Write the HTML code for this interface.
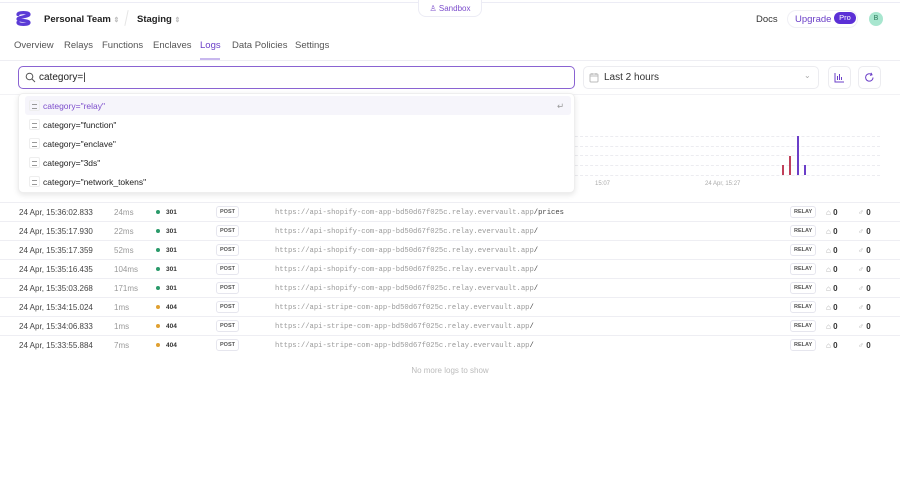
<!DOCTYPE html>
<html><head><meta charset="utf-8"><style>
*{box-sizing:border-box;margin:0;padding:0}
body{width:900px;height:484px;background:#fff;font-family:"Liberation Sans",sans-serif;position:relative;overflow:hidden;color:#222}
.a{position:absolute;white-space:nowrap}
.mono{font-family:"Liberation Mono",monospace}
.row{position:absolute;left:0;width:900px;height:19px;border-top:1px solid #eeeef3;font-size:8px}
.row span{position:absolute;top:5px;white-space:nowrap}
.row .mono{font-size:7.2px;top:5.5px}
.tag{position:absolute;border:1px solid #e6e6ee;border-radius:3px;font-size:5.5px;font-weight:bold;color:#555;padding:2px 3px;top:3px!important;background:#fff}
.dot{width:4px;height:4px;border-radius:50%;top:7px!important}
.sug{position:absolute;left:6px;width:546px;height:19px;font-size:8.5px;color:#222}
.sug .ic{position:absolute;left:4px;top:4px;width:11px;height:11px;border:1px solid #eee;border-radius:2px}
.sug .ic:before{content:"";position:absolute;left:2px;top:3px;width:5px;height:3px;border-top:1px solid #999;border-bottom:1px solid #999}
.sug span{position:absolute;left:18px;top:5px}
.grid{position:absolute;left:575px;width:305px;border-top:1px dashed #ececf0}
.nav span{position:absolute;white-space:nowrap}
</style></head><body>
<div class="a" style="left:0;top:2px;width:900px;border-top:1px solid #ececf5"></div>
<div class="a" style="left:418px;top:0;width:64px;height:17px;background:#fff;border:1px solid #ececf5;border-top:none;border-radius:0 0 8px 8px;font-size:8px;color:#7c4dcc;text-align:center;line-height:17px">♙ Sandbox</div>
<svg class="a" style="left:15px;top:10px" width="17" height="17" viewBox="0 0 17 17"><path d="M3 4.5 C3 2,14 2,14 4.5 C14 6.5,3 7,3 9 C3 11,14 10,14 12.5 C14 15,3 15,3 12.5" fill="none" stroke="#5b3bd6" stroke-width="3.2" stroke-linecap="round"/></svg>
<div class="a" style="left:44px;top:14px;font-size:9.5px;font-weight:bold;color:#222">Personal Team <span style="color:#bbb;font-size:7px">⇕</span></div>
<div class="a" style="left:126px;top:10px;height:16px;border-left:1px solid #e5e5e5;transform:rotate(12deg)"></div>
<div class="a" style="left:137px;top:14px;font-size:9.5px;font-weight:bold;color:#222">Staging <span style="color:#bbb;font-size:7px">⇕</span></div>
<div class="a" style="left:756px;top:14px;font-size:9.5px;color:#333">Docs</div>
<div class="a" style="left:787px;top:10px;width:71px;height:18px;border:1px solid #f0f0f5;border-radius:9px"></div>
<div class="a" style="left:795px;top:14px;font-size:9.5px;color:#6b3fc8">Upgrade</div>
<div class="a" style="left:834px;top:12px;width:22px;height:12px;border-radius:6px;background:#5b2fd6;color:#fff;font-size:7.5px;text-align:center;line-height:12px">Pro</div>
<div class="a" style="left:869px;top:12px;width:14px;height:14px;border-radius:50%;background:#a8e6cf;color:#2a7a5a;font-size:7px;text-align:center;line-height:14px">B</div>
<div class="a nav" style="left:14px;top:40px;font-size:9.5px;color:#555">
<span style="left:0">Overview</span><span style="left:50px">Relays</span><span style="left:88px">Functions</span><span style="left:139px">Enclaves</span><span style="left:186px;color:#6b3fc8">Logs</span><span style="left:218px">Data Policies</span><span style="left:281px">Settings</span></div>
<div class="a" style="left:200px;top:58px;width:20px;height:2px;background:#c8b8ee"></div>
<div class="a" style="left:0;top:60px;width:900px;border-top:1px solid #eeeef3"></div>
<div class="a" style="left:18px;top:66px;width:557px;height:23px;border:1.5px solid #8a63d2;border-radius:5px"></div>
<svg class="a" style="left:25px;top:72px" width="11" height="11" viewBox="0 0 11 11"><circle cx="4.5" cy="4.5" r="3.3" fill="none" stroke="#555" stroke-width="1"/><path d="M7 7l3 3" stroke="#555"/></svg>
<div class="a" style="left:39px;top:72px;font-size:10px;color:#222">category=|</div>
<div class="a" style="left:583px;top:66px;width:236px;height:23px;border:1px solid #ececf0;border-radius:5px"></div>
<svg class="a" style="left:589px;top:72px" width="11" height="11"><rect x="1" y="2" width="8" height="8" rx="1" fill="none" stroke="#bbb"/><path d="M1 4h8M3 1v2M7 1v2" stroke="#bbb"/></svg>
<div class="a" style="left:604px;top:72px;font-size:10px;color:#333">Last 2 hours</div>
<div class="a" style="left:804px;top:71px;font-size:8px;color:#aaa">⌄</div>
<div class="a" style="left:828px;top:66px;width:23px;height:23px;border:1px solid #ececf0;border-radius:5px"></div>
<svg class="a" style="left:834px;top:72px" width="11" height="11"><path d="M1 1v9h9M3.5 8V4M5.5 8V2M7.5 8V5" stroke="#6b3fc8" fill="none"/></svg>
<div class="a" style="left:858px;top:66px;width:23px;height:23px;border:1px solid #ececf0;border-radius:5px"></div>
<svg class="a" style="left:864px;top:72px" width="11" height="11"><path d="M9 5.5A3.7 3.7 0 1 1 7.5 2.5M7 0.8l1 2-2 .6" stroke="#6b3fc8" fill="none"/></svg>
<div class="a" style="left:0;top:94px;width:900px;border-top:1px solid #f2f2f5"></div>
<div class="grid" style="top:136px"></div><div class="grid" style="top:146px"></div><div class="grid" style="top:155px"></div><div class="grid" style="top:165px"></div><div class="grid" style="top:175px"></div>
<div class="a" style="left:782px;top:165px;width:2px;height:10px;background:#c0405a"></div>
<div class="a" style="left:789px;top:156px;width:2px;height:19px;background:#c0405a"></div>
<div class="a" style="left:797px;top:136px;width:2px;height:39px;background:#6b3fc8"></div>
<div class="a" style="left:804px;top:165px;width:2px;height:10px;background:#6b3fc8"></div>
<div class="a" style="left:595px;top:181px;font-size:6px;color:#aaa">15:07</div>
<div class="a" style="left:705px;top:181px;font-size:6px;color:#aaa">24 Apr, 15:27</div>
<div class="a" style="left:18px;top:93px;width:557px;height:100px;background:#fff;border:1px solid #eee;border-radius:5px;box-shadow:0 2px 6px rgba(0,0,0,.1)">
<div class="sug" style="top:2px;background:#f6f5fb;border-radius:3px;color:#7c4dcc"><div class="ic"></div><span>category="relay"</span><span style="left:532px;color:#999">↵</span></div>
<div class="sug" style="top:21px"><div class="ic"></div><span>category="function"</span></div>
<div class="sug" style="top:40px"><div class="ic"></div><span>category="enclave"</span></div>
<div class="sug" style="top:59px"><div class="ic"></div><span>category="3ds"</span></div>
<div class="sug" style="top:78px"><div class="ic"></div><span>category="network_tokens"</span></div>
</div>
<div class="row" style="top:202px"><span style="left:19px;color:#444">24 Apr, 15:36:02.833</span><span style="left:114px;color:#999">24ms</span><span class="dot" style="left:156px;background:#2a9a6a"></span><span style="left:166px;font-size:6.5px;font-weight:bold;color:#333;top:6px">301</span><span class="tag" style="left:216px">POST</span><span class="mono" style="left:275px;color:#999">https://api-shopify-com-app-bd50d67f025c.relay.evervault.app<b style="color:#444;font-weight:normal">/prices</b></span><span class="tag" style="left:790px">RELAY</span><span style="left:826px;color:#aaa">⌂<b style="color:#333"> 0</b></span><span style="left:858px;color:#aaa">♂<b style="color:#333"> 0</b></span></div>
<div class="row" style="top:221px"><span style="left:19px;color:#444">24 Apr, 15:35:17.930</span><span style="left:114px;color:#999">22ms</span><span class="dot" style="left:156px;background:#2a9a6a"></span><span style="left:166px;font-size:6.5px;font-weight:bold;color:#333;top:6px">301</span><span class="tag" style="left:216px">POST</span><span class="mono" style="left:275px;color:#999">https://api-shopify-com-app-bd50d67f025c.relay.evervault.app<b style="color:#444;font-weight:normal">/</b></span><span class="tag" style="left:790px">RELAY</span><span style="left:826px;color:#aaa">⌂<b style="color:#333"> 0</b></span><span style="left:858px;color:#aaa">♂<b style="color:#333"> 0</b></span></div>
<div class="row" style="top:240px"><span style="left:19px;color:#444">24 Apr, 15:35:17.359</span><span style="left:114px;color:#999">52ms</span><span class="dot" style="left:156px;background:#2a9a6a"></span><span style="left:166px;font-size:6.5px;font-weight:bold;color:#333;top:6px">301</span><span class="tag" style="left:216px">POST</span><span class="mono" style="left:275px;color:#999">https://api-shopify-com-app-bd50d67f025c.relay.evervault.app<b style="color:#444;font-weight:normal">/</b></span><span class="tag" style="left:790px">RELAY</span><span style="left:826px;color:#aaa">⌂<b style="color:#333"> 0</b></span><span style="left:858px;color:#aaa">♂<b style="color:#333"> 0</b></span></div>
<div class="row" style="top:259px"><span style="left:19px;color:#444">24 Apr, 15:35:16.435</span><span style="left:114px;color:#999">104ms</span><span class="dot" style="left:156px;background:#2a9a6a"></span><span style="left:166px;font-size:6.5px;font-weight:bold;color:#333;top:6px">301</span><span class="tag" style="left:216px">POST</span><span class="mono" style="left:275px;color:#999">https://api-shopify-com-app-bd50d67f025c.relay.evervault.app<b style="color:#444;font-weight:normal">/</b></span><span class="tag" style="left:790px">RELAY</span><span style="left:826px;color:#aaa">⌂<b style="color:#333"> 0</b></span><span style="left:858px;color:#aaa">♂<b style="color:#333"> 0</b></span></div>
<div class="row" style="top:278px"><span style="left:19px;color:#444">24 Apr, 15:35:03.268</span><span style="left:114px;color:#999">171ms</span><span class="dot" style="left:156px;background:#2a9a6a"></span><span style="left:166px;font-size:6.5px;font-weight:bold;color:#333;top:6px">301</span><span class="tag" style="left:216px">POST</span><span class="mono" style="left:275px;color:#999">https://api-shopify-com-app-bd50d67f025c.relay.evervault.app<b style="color:#444;font-weight:normal">/</b></span><span class="tag" style="left:790px">RELAY</span><span style="left:826px;color:#aaa">⌂<b style="color:#333"> 0</b></span><span style="left:858px;color:#aaa">♂<b style="color:#333"> 0</b></span></div>
<div class="row" style="top:297px"><span style="left:19px;color:#444">24 Apr, 15:34:15.024</span><span style="left:114px;color:#999">1ms</span><span class="dot" style="left:156px;background:#e0a030"></span><span style="left:166px;font-size:6.5px;font-weight:bold;color:#333;top:6px">404</span><span class="tag" style="left:216px">POST</span><span class="mono" style="left:275px;color:#999">https://api-stripe-com-app-bd50d67f025c.relay.evervault.app<b style="color:#444;font-weight:normal">/</b></span><span class="tag" style="left:790px">RELAY</span><span style="left:826px;color:#aaa">⌂<b style="color:#333"> 0</b></span><span style="left:858px;color:#aaa">♂<b style="color:#333"> 0</b></span></div>
<div class="row" style="top:316px"><span style="left:19px;color:#444">24 Apr, 15:34:06.833</span><span style="left:114px;color:#999">1ms</span><span class="dot" style="left:156px;background:#e0a030"></span><span style="left:166px;font-size:6.5px;font-weight:bold;color:#333;top:6px">404</span><span class="tag" style="left:216px">POST</span><span class="mono" style="left:275px;color:#999">https://api-stripe-com-app-bd50d67f025c.relay.evervault.app<b style="color:#444;font-weight:normal">/</b></span><span class="tag" style="left:790px">RELAY</span><span style="left:826px;color:#aaa">⌂<b style="color:#333"> 0</b></span><span style="left:858px;color:#aaa">♂<b style="color:#333"> 0</b></span></div>
<div class="row" style="top:335px"><span style="left:19px;color:#444">24 Apr, 15:33:55.884</span><span style="left:114px;color:#999">7ms</span><span class="dot" style="left:156px;background:#e0a030"></span><span style="left:166px;font-size:6.5px;font-weight:bold;color:#333;top:6px">404</span><span class="tag" style="left:216px">POST</span><span class="mono" style="left:275px;color:#999">https://api-stripe-com-app-bd50d67f025c.relay.evervault.app<b style="color:#444;font-weight:normal">/</b></span><span class="tag" style="left:790px">RELAY</span><span style="left:826px;color:#aaa">⌂<b style="color:#333"> 0</b></span><span style="left:858px;color:#aaa">♂<b style="color:#333"> 0</b></span></div>
<div class="a" style="left:0;top:366px;width:900px;text-align:center;font-size:8px;color:#bbb">No more logs to show</div>
</body></html>
